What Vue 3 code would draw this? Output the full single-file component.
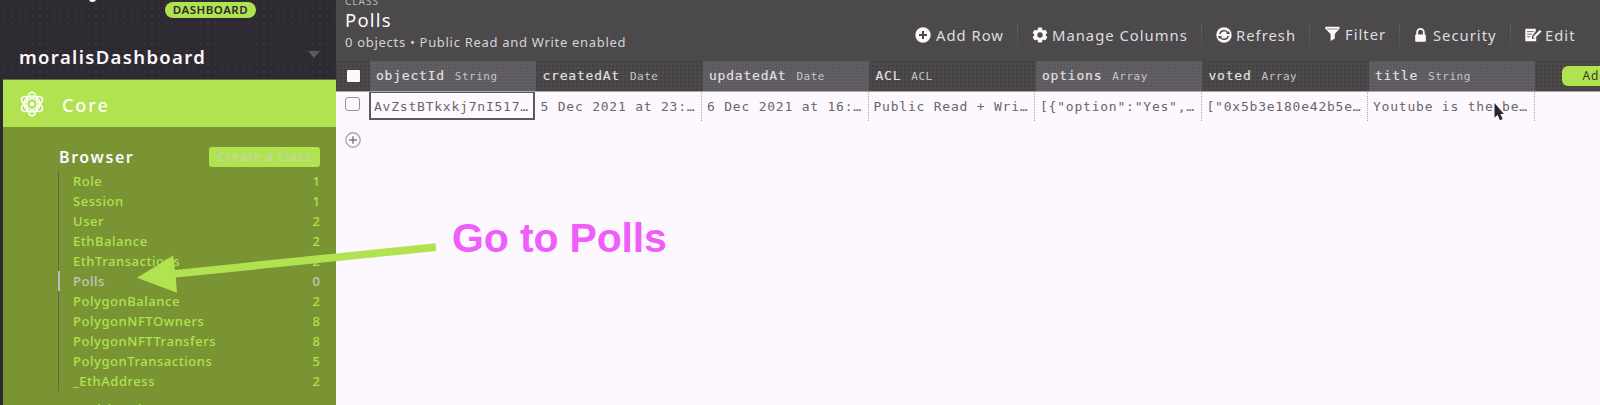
<script setup>
const classes = [
  ['Role', '1'], ['Session', '1'], ['User', '2'], ['EthBalance', '2'],
  ['EthTransactions', '2'], ['Polls', '0'], ['PolygonBalance', '2'],
  ['PolygonNFTOwners', '8'], ['PolygonNFTTransfers', '8'],
  ['PolygonTransactions', '5'], ['_EthAddress', '2'],
]
const columns = [
  { name: 'objectId', type: 'String', value: 'AvZstBTkxkj7nI517…' },
  { name: 'createdAt', type: 'Date', value: '5 Dec 2021 at 23:…' },
  { name: 'updatedAt', type: 'Date', value: '6 Dec 2021 at 16:…' },
  { name: 'ACL', type: 'ACL', value: 'Public Read + Wri…' },
  { name: 'options', type: 'Array', value: '[{"option":"Yes",…' },
  { name: 'voted', type: 'Array', value: '["0x5b3e180e42b5e…' },
  { name: 'title', type: 'String', value: 'Youtube is the be…' },
]
const tools = [
  { label: 'Add Row', icon: 'add' },
  { label: 'Manage Columns', icon: 'gear' },
  { label: 'Refresh', icon: 'refresh' },
  { label: 'Filter', icon: 'filter' },
  { label: 'Security', icon: 'lock' },
  { label: 'Edit', icon: 'edit' },
]
</script>

<template>
  <div class="app">
    <aside class="sidebar">
      <div class="brand">
        <i class="logo-tail"></i>
        <span class="badge">DASHBOARD</span>
        <div class="project"><span>moralisDashboard</span><i class="caret"></i></div>
      </div>
      <div class="core">
        <svg class="atom" width="26" height="26" viewBox="0 0 26 26" fill="none" stroke="#fff" stroke-width="1.4">
          <ellipse cx="13" cy="13" rx="5.2" ry="11.8" />
          <ellipse cx="13" cy="13" rx="5.2" ry="11.8" transform="rotate(60 13 13)" />
          <ellipse cx="13" cy="13" rx="5.2" ry="11.8" transform="rotate(120 13 13)" />
          <circle cx="13" cy="13" r="8" />
          <circle cx="13" cy="13" r="2.3" fill="#fff" stroke="none" />
        </svg>
        <span>Core</span>
      </div>
      <div class="browser">
        <div class="browser-head"><span class="browser-title">Browser</span><span class="create">Create a class</span></div>
        <div class="list">
          <div v-for="c in classes" :key="c[0]" class="item" :class="{ active: c[0] === 'Polls' }">
            <span>{{ c[0] }}</span><span class="count">{{ c[1] }}</span>
          </div>
        </div>
        <div class="next">Webhooks</div>
      </div>
    </aside>

    <main class="main">
      <header class="toolbar">
        <div class="heading">
          <div class="kicker">CLASS</div>
          <div class="title">Polls</div>
          <div class="sub">0 objects • Public Read and Write enabled</div>
        </div>
        <div class="tools">
          <div v-for="t in tools" :key="t.label" class="tool" :class="t.icon">
            <svg v-if="t.icon === 'add'" class="ico" width="16" height="16" viewBox="0 0 16 16">
              <circle cx="8" cy="8" r="7.7" fill="#fdf8fe" /><path d="M8 4v8M4 8h8" stroke="#4b494a" stroke-width="2" />
            </svg>
            <svg v-else-if="t.icon === 'gear'" class="ico" width="16" height="16" viewBox="0 0 16 16">
              <g fill="#fdf8fe"><circle cx="8" cy="8" r="5.8" />
                <rect x="5.8" y=".6" width="4.4" height="14.8" rx="1" />
                <rect x="5.8" y=".6" width="4.4" height="14.8" rx="1" transform="rotate(60 8 8)" />
                <rect x="5.8" y=".6" width="4.4" height="14.8" rx="1" transform="rotate(120 8 8)" /></g>
              <circle cx="8" cy="8" r="2.7" fill="#4b494a" />
            </svg>
            <svg v-else-if="t.icon === 'refresh'" class="ico" width="16" height="16" viewBox="0 0 16 16">
              <circle cx="8" cy="8" r="7.7" fill="#fdf8fe" />
              <path d="M3.8 7.2A4.3 4.3 0 0 1 11.6 5.6M12.2 8.8A4.3 4.3 0 0 1 4.4 10.4" fill="none" stroke="#4b494a" stroke-width="1.4" />
              <path d="M10 7h4l-1.3-3zM6 9H2l1.3 3z" fill="#4b494a" />
            </svg>
            <svg v-else-if="t.icon === 'filter'" class="ico" width="15" height="15" viewBox="0 0 15 15">
              <path d="M.3.8h14.2v2L9.8 8v4.6L5.6 15V8L.3 2.8z" fill="#fdf8fe" /><path d="M2 3h11" stroke="#777577" stroke-width=".8" />
            </svg>
            <svg v-else-if="t.icon === 'lock'" class="ico" width="11" height="14" viewBox="0 0 11 14">
              <path d="M2.2 7V4.2a3.3 3.3 0 0 1 6.6 0V7" fill="none" stroke="#fdf8fe" stroke-width="1.8" />
              <rect x=".2" y="6.4" width="10.6" height="7.4" rx=".8" fill="#fdf8fe" />
            </svg>
            <svg v-else class="ico" width="17" height="14" viewBox="0 0 17 14">
              <path d="M.3.8h10.5v2.4L7 8.2v2.7l2.4-.3 1.8-1.8v4.5H.3z" fill="#fdf8fe" />
              <path d="M2 3.6h6.8M2 6.2h5M2 8.8h3.4" stroke="#69666a" stroke-width=".9" />
              <path d="M8.2 10.3l.5-2.3L14.9 2l1.7 1.5-6.4 6.2z" fill="#fdf8fe" />
            </svg>
            <span class="tool-label">{{ t.label }}</span>
          </div>
        </div>
      </header>

      <div class="thead">
        <div class="check-cell"><i class="check-all"></i></div>
        <div v-for="c in columns" :key="c.name" class="th">
          <span class="col-name">{{ c.name }}</span><span class="col-type">{{ c.type }}</span>
        </div>
        <div class="th-end"><span class="add-col">Add a new column</span></div>
      </div>
      <div class="row">
        <div class="check-cell"><i class="check"></i></div>
        <div v-for="(c, i) in columns" :key="c.name" class="td" :class="{ selected: i === 0 }"><span class="value">{{ c.value }}</span></div>
      </div>
      <svg class="plus" width="16" height="16" viewBox="0 0 16 16" fill="none">
        <circle cx="8" cy="8" r="7.2" stroke="#a9a9ad" stroke-width="1.4" /><path d="M8 4.2v7.6M4.2 8h7.6" stroke="#77777b" stroke-width="1.4" />
      </svg>
    </main>

    <svg class="arrow" width="1600" height="405" viewBox="0 0 1600 405">
      <path d="M137 277.7L173.2 255.5 175 270 435.5 243.2 436.3 251 175.8 277.6 177 292.8z" fill="#b0e34f" />
      <path d="M1494.5 104.5v14.8l3.1-3 2.4 5.5 2.7-1.2-2.4-5.2h3.6z" fill="#29272e" transform="translate(0 -1.5)" />
    </svg>
    <div class="note">Go to Polls</div>
  </div>
</template>

<style>
body { overflow: hidden; }
</style>
<style scoped>
.app { position: relative; display: flex; width: 1600px; height: 405px; overflow: hidden; background: #fdf8fe; font-family: "Noto Sans", "Open Sans", sans-serif; white-space: nowrap; }
.sidebar { width: 333px; flex: none; border-left: 3px solid #2d2a31; background: #7a9433; }
.brand { position: relative; height: 80px; box-sizing: border-box; border-bottom: 1px solid #67713f; background: radial-gradient(circle at 2px 2px, #48464c 0 .5px, transparent .8px) 0 0 / 7px 7px, #2d2a31; }
.logo-tail { position: absolute; left: 86px; top: -4px; width: 7px; height: 6px; border-radius: 50%; background: #fff; }
.badge { position: absolute; left: 162px; top: 2px; width: 91px; height: 16px; border-radius: 8px; background: #b0e34f; color: #2d2a31; font-size: 11.5px; font-weight: 600; line-height: 16px; letter-spacing: .5px; text-align: center; }
.project { display: flex; align-items: center; justify-content: space-between; padding: 43px 16px 0 16px; color: #fdf8fe; font-size: 18.5px; font-weight: 600; line-height: 28px; letter-spacing: 1.35px; }
.caret { border: 6px solid transparent; border-top: 7px solid #5b595b; border-bottom: 0; margin-bottom: 5px; }
.core { display: flex; align-items: center; height: 47px; padding-left: 16px; background: #b0e34f; color: #fff; font-size: 18px; font-weight: 500; letter-spacing: 1.9px; }
.atom { margin: 0 17px 0 0; }
.core span { padding-top: 3px; }
.browser-head { display: flex; justify-content: space-between; align-items: center; padding: 19px 16px 1px 56px; height: 21px; }
.browser-title { color: #fdf8fe; font-size: 16px; font-weight: 600; letter-spacing: 1.6px; }
.create { width: 111px; height: 20px; border-radius: 3px; background: #b0e34f; color: #c9d2bd; font-size: 12px; line-height: 19px; letter-spacing: 1.2px; text-align: center; }
.list { margin: 3px 16px 0 55px; border-left: 1px solid #62664b; height: 220px; }
.item { display: flex; justify-content: space-between; height: 20px; padding-left: 14px; color: #b0e34f; font-size: 13px; font-weight: 500; line-height: 20px; letter-spacing: .55px; }
.item .count { letter-spacing: 0; }
.item.active { margin-left: -1px; padding-left: 13px; border-left: 2px solid #bcbcc0; color: #c5c8bf; }
.next { margin: 7px 0 0 70px; color: #b0e34f; font-size: 15px; line-height: 22px; letter-spacing: 1px; }
.main { flex: 1; min-width: 0; }
.toolbar { display: flex; height: 61px; background: radial-gradient(circle at 2px 2px, #5b595b 0 .5px, transparent .8px) 0 0 / 16px 10px, #4b494a; color: #fdf8fe; }
.heading { width: 568px; padding-left: 9px; }
.kicker { height: 5px; margin-top: -5px; padding-bottom: 5px; color: #b8b6ba; font-size: 10px; line-height: 13px; letter-spacing: 1px; }
.title { padding-top: 2px; padding-bottom: 1px; font-size: 18.5px; line-height: 26px; letter-spacing: 1.2px; }
.sub { margin-top: -1px; color: #d5d3d8; font-size: 13px; line-height: 18px; letter-spacing: .7px; }
.tools { display: grid; grid-template-columns: 114px 184px 108px 90px 111px 89px; height: 22px; margin-top: 24px; }
.tool { display: flex; align-items: center; height: 22px; padding-left: 11px; border-right: 1px dotted #656366; color: #dfdde2; font-size: 14.8px; letter-spacing: 1px; }
.tool.gear { padding-left: 14px; }
.tool.refresh { padding-left: 14px; }
.tool.filter { padding-left: 15px; }
.tool.lock { padding-left: 15px; }
.tool.edit { padding-left: 14px; border: 0; }
.ico { flex: none; margin-right: 4px; }
.add .ico { margin-right: 5px; }
.filter .ico { margin-right: 5px; }
.lock .ico { margin-right: 7px; }
.edit .ico { margin-right: 3px; }
.filter .tool-label, .filter .ico { margin-top: -3px; }
.thead { display: grid; grid-template-columns: 34px repeat(7, 166.5px) 1fr; height: 30px; background: radial-gradient(circle at 1px 1px, #2f2c33 0 .5px, transparent .8px) 0 0 / 4px 4px, #4b494a; font-family: "DejaVu Sans Mono", "Liberation Mono", monospace; }
.check-cell { padding: 9px 0 0 11px; }
.check-all { display: block; width: 13px; height: 12px; border-radius: 1px; background: #fdf8fe; }
.th { display: flex; align-items: center; gap: 10px; padding: 1px 0 0 6px; color: #e3e1e6; }
.th:nth-child(even) { margin-right: 1px; background: radial-gradient(circle at 1px 1px, #4b494a 0 .5px, transparent .8px) 0 0 / 3px 3px, #626064; }
.col-name, .col-type, .value { display: inline-block; transform: scaleY(.88); }
.col-name { font-size: 13px; letter-spacing: .78px; -webkit-text-stroke: .15px #e3e1e6; }
.col-type { color: #c6c4c9; font-size: 11px; letter-spacing: .5px; }
.th-end { padding: 5px 0 0 26px; overflow: hidden; }
.add-col { display: block; width: 130px; height: 20px; box-sizing: border-box; padding-left: 21px; border-radius: 6px; background: #b0e34f; color: #36382e; font-family: "Noto Sans", sans-serif; font-size: 12px; line-height: 20px; letter-spacing: .8px; }
.row { display: grid; grid-template-columns: 33px repeat(7, 166.5px); height: 29px; border-top: 1px solid #a9a7ab; box-sizing: border-box; }
.row .check-cell { padding: 5px 0 0 9px; }
.check { display: block; width: 13px; height: 12px; border: 1.5px solid #96959a; border-radius: 3px; }
.td { height: 29px; box-sizing: border-box; border-right: 1px dotted #a9a7ab; padding-left: 5px; color: #68666a; font-family: "DejaVu Sans Mono", "Liberation Mono", monospace; font-size: 13px; line-height: 30px; letter-spacing: .78px; }
.td.selected { height: 28px; border: 2px solid #565b5e; border-top-width: 1px; padding-left: 3px; margin-right: 1px; line-height: 28px; }
.plus { display: block; margin: 12px 0 0 9px; }
.arrow { position: absolute; left: 0; top: 0; }
.note { position: absolute; left: 452px; top: 214px; color: #ef5dfa; font: bold 41px/48px "Liberation Sans", sans-serif; letter-spacing: -.15px; }
</style>
